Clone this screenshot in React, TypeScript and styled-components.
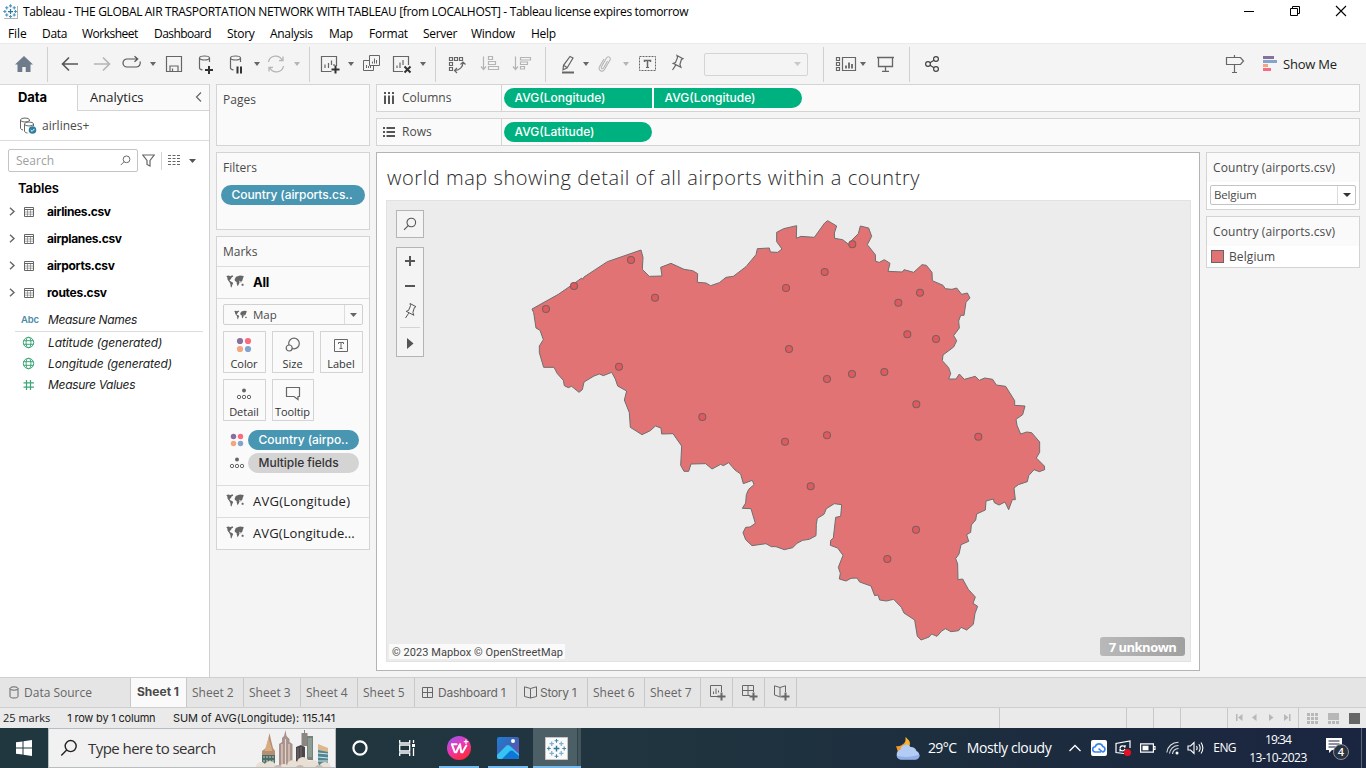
import React from 'react';
import styled, { createGlobalStyle } from 'styled-components';

const SANS = '"Open Sans", "Noto Sans", sans-serif';
const INTER = 'Inter, "Open Sans", sans-serif';
const INK = '#4a4a4a';
const LINE = '#d4d4d4';

const Global = createGlobalStyle`
  * { box-sizing: border-box; }
  body { margin: 0; background: #f4f4f4; overflow: hidden; font-family: ${SANS}; }
  svg { display: block; flex: none; }
`;

interface TextProps { $size?: number; $ls?: number; $weight?: number; $color?: string; $font?: string; $italic?: boolean; $ml?: number }
const Text = styled.span<TextProps>`
  display: block;
  font-family: ${p => p.$font ?? SANS};
  font-size: ${p => p.$size ?? 12}px;
  font-weight: ${p => p.$weight ?? 400};
  font-style: ${p => (p.$italic ? 'italic' : 'normal')};
  letter-spacing: ${p => p.$ls ?? 0}px;
  margin-left: ${p => p.$ml ?? 0}px;
  color: ${p => p.$color ?? INK};
  white-space: nowrap;
  line-height: 16px;
`;

const Window = styled.div`
  display: flex;
  flex-direction: column;
  width: 1366px;
  height: 768px;
`;

/* ---------- title and menu ---------- */
const TitleBar = styled.header`
  display: flex;
  align-items: center;
  height: 23px;
  padding-left: 3px;
  background: #fff;
`;
const WindowButtons = styled.div`
  display: flex;
  gap: 34px;
  margin-left: auto;
  padding-right: 19px;
  margin-top: -2px;
`;
const MenuBar = styled.nav`
  display: flex;
  height: 20px;
  background: #fff;
  padding: 2px 0 0 8px;
  align-items: center;
`;
const MenuItem = styled(Text)<{ $w: number }>`
  width: ${p => p.$w}px;
  color: #000;
`;

/* ---------- toolbar ---------- */
const ToolBar = styled.div`
  display: flex;
  align-items: center;
  height: 41px;
  border-top: 1px solid #ebebeb;
  background: #f4f4f4;
`;
const Slot = styled.div<{ $ml: number; $w: number }>`
  margin-left: ${p => p.$ml}px;
  width: ${p => p.$w}px;
  flex: none;
`;
const Divider = styled.div<{ $ml: number }>`
  margin-left: ${p => p.$ml}px;
  width: 1px;
  height: 35px;
  background: #d0d0d0;
`;
const FitBox = styled.div`
  display: flex;
  align-items: center;
  justify-content: flex-end;
  width: 104px;
  height: 23px;
  margin-left: 19px;
  padding-right: 6px;
  border: 1px solid #d4d4d4;
  border-radius: 2px;
`;

/* ---------- data pane ---------- */
const Body = styled.div`
  display: flex;
  flex: 1;
  min-height: 0;
`;
const DataPane = styled.aside`
  width: 210px;
  background: #fff;
  border-right: 1px solid #d0d0d0;
  border-top: 1px solid #d8d8d8;
`;
const PaneTabs = styled.div`
  display: flex;
  height: 26px;
`;
const DataTab = styled.div`
  width: 77px;
  padding: 4px 0 0 18px;
`;
const AnalyticsTab = styled.div`
  display: flex;
  flex: 1;
  justify-content: space-between;
  padding: 4px 7px 0 12px;
  background: #fafafa;
  border-left: 1px solid ${LINE};
  border-bottom: 1px solid ${LINE};
`;
const SourceRow = styled.div`
  display: flex;
  align-items: center;
  gap: 5px;
  height: 30px;
  padding-left: 20px;
  border-bottom: 1px solid #dcdcdc;
`;
const SearchRow = styled.div`
  display: flex;
  align-items: center;
  margin: 8px 0 0 8px;
  height: 23px;
`;
const SearchBox = styled.div`
  display: flex;
  align-items: center;
  justify-content: space-between;
  width: 130px;
  height: 23px;
  padding: 0 6px 0 7px;
  border: 1px solid #c4c4c4;
  border-radius: 2px;
`;
const TablesHeading = styled.div`
  height: 26px;
  padding: 8px 0 0 18px;
`;
const TableRow = styled.div`
  display: flex;
  align-items: center;
  height: 27px;
  padding-left: 9px;
`;
const FieldRow = styled.div<{ $first?: boolean }>`
  display: flex;
  align-items: center;
  height: ${p => (p.$first ? 26 : 21)}px;
  padding-top: ${p => (p.$first ? 2 : 0)}px;
  border-bottom: ${p => (p.$first ? '1px solid #dcdcdc' : 'none')};
  margin: 0 6px 0 15px;
`;
const FieldIcon = styled.div`
  width: 33px;
  padding-left: 7px;
`;

/* ---------- cards ---------- */
const CardColumn = styled.div`
  display: flex;
  flex-direction: column;
  gap: 6px;
  width: 154px;
  margin-left: 6px;
`;
const Card = styled.section<{ $h: number }>`
  height: ${p => p.$h}px;
  border: 1px solid ${LINE};
  background: #fafafa;
`;
const CardTitle = styled.div`
  padding: 7px 0 0 6px;
  height: 29px;
`;
const Pill = styled.div<{ $w: number; $bg: string; $side?: 'left' | 'right' }>`
  display: flex;
  align-items: center;
  width: ${p => p.$w}px;
  height: 20px;
  padding-left: 10.600px;
  background: ${p => p.$bg};
  border-radius: ${p => (p.$side === 'left' ? '10px 0 0 10px' : p.$side === 'right' ? '0 10px 10px 0' : '10px')};
`;
const FilterSlot = styled.div`
  padding: 3px 0 0 4px;
`;
const MarksRow = styled.div<{ $h: number }>`
  display: flex;
  align-items: center;
  gap: 9px;
  height: ${p => p.$h}px;
  padding: 0 0 2px 9px;
  border-top: 1px solid #dcdcdc;
`;
const MarksBody = styled.div`
  height: 187px;
  border-top: 1px solid #dcdcdc;
  padding: 5px 6px 0;
`;
const MarkSelect = styled.div`
  display: flex;
  align-items: center;
  height: 21px;
  padding-left: 10px;
  border: 1px solid #d0d0d0;
  border-radius: 2px;
`;
const SelectArrow = styled.div<{ $w: number }>`
  display: flex;
  align-items: center;
  justify-content: center;
  width: ${p => p.$w}px;
  height: 100%;
  margin-left: auto;
  border-left: 1px solid #dcdcdc;
`;
const MarkButtons = styled.div`
  display: grid;
  grid-template-columns: 43px 42px 43px;
  gap: 6px;
  margin-top: 6px;
`;
const MarkButton = styled.div`
  display: flex;
  flex-direction: column;
  align-items: center;
  justify-content: space-between;
  height: 42px;
  padding: 5px 1px 0 0;
  border: 1px solid ${LINE};
`;
const EncodingRow = styled.div`
  display: flex;
  align-items: center;
  gap: 4px;
  height: 20px;
  margin: 9px 0 -6px 7px;
`;

/* ---------- shelves and view ---------- */
const Work = styled.main`
  display: flex;
  flex-direction: column;
  gap: 6px;
  width: 984px;
  margin-left: 6px;
`;
const Shelf = styled.div`
  display: flex;
  align-items: center;
  height: 28px;
  border: 1px solid ${LINE};
  background: #fafafa;
`;
const ShelfLabel = styled.div`
  display: flex;
  align-items: center;
  gap: 7px;
  width: 125px;
  height: 26px;
  padding-left: 6px;
  margin-right: 2px;
  border-right: 1px solid ${LINE};
`;
const ViewRow = styled.div`
  display: flex;
  gap: 6px;
`;
const Sheet = styled.section`
  width: 824px;
  height: 519px;
  border: 1px solid #b4b4b4;
  background: #fff;
  padding: 0 8px 0 9px;
`;
const SheetTitle = styled.div`
  display: flex;
  align-items: center;
  height: 47px;
  padding: 3px 0 0 1px;
`;
const MapPane = styled.div`
  position: relative;
  width: 805px;
  height: 462px;
  border: 1px solid #e2e2e2;
  background: #ececec;
`;
const MapSearch = styled.div`
  position: absolute;
  left: 9px;
  top: 9px;
  display: flex;
  align-items: center;
  justify-content: center;
  width: 28px;
  height: 28px;
  border: 1px solid #b4b4b4;
  background: #f4f4f4;
`;
const MapTools = styled.div`
  position: absolute;
  left: 9px;
  top: 46px;
  width: 28px;
  height: 110px;
  border: 1px solid #b4b4b4;
  background: #f4f4f4;
`;
const Attribution = styled.div`
  position: absolute;
  left: 2px;
  bottom: 2px;
  display: flex;
  align-items: center;
  width: 176px;
  height: 15px;
  padding: 2px 0 0 3px;
  background: #fafafa;
`;
const Unknown = styled.div`
  position: absolute;
  right: 5px;
  bottom: 5px;
  display: flex;
  align-items: center;
  justify-content: center;
  width: 85px;
  height: 19px;
  border-radius: 3px;
  background: linear-gradient(90deg, #b9b9b9, #a0a0a0);
`;
const Legends = styled.div`
  display: flex;
  flex-direction: column;
  gap: 6px;
  width: 154px;
`;
const LegendCard = styled.section<{ $h: number }>`
  height: ${p => p.$h}px;
  border: 1px solid ${LINE};
  background: #fff;
`;
const LegendHead = styled.div`
  height: 29px;
  padding: 7px 0 0 6px;
  background: #fafafa;
`;
const FilterSelect = styled.div`
  display: flex;
  align-items: center;
  width: 146px;
  height: 20px;
  margin: 3px 0 0 3px;
  padding-left: 3px;
  border: 1px solid #c4c4c4;
  border-radius: 2px;
`;
const LegendItem = styled.div`
  display: flex;
  align-items: center;
  gap: 5px;
  height: 21px;
  padding-left: 4px;
`;
const Swatch = styled.div`
  width: 13px;
  height: 13px;
  border: 1px solid #666;
  background: #e27375;
`;

/* ---------- sheet tabs and status ---------- */
const TabBar = styled.div`
  display: flex;
  height: 31px;
  background: #e5e5e5;
  border-top: 1px solid #cfcfcf;
  border-bottom: 1px solid #cfcfcf;
`;
const SheetTab = styled.div<{ $w: number; $active?: boolean; $pl?: number }>`
  display: flex;
  align-items: center;
  gap: 5px;
  width: ${p => p.$w}px;
  padding-left: ${p => p.$pl ?? 5}px;
  padding-bottom: ${p => (p.$active ? 2 : 0)}px;
  background: ${p => (p.$active ? '#fafafa' : 'transparent')};
  border-right: 1px solid #c8c8c8;
`;
const StatusBar = styled.div`
  display: flex;
  align-items: center;
  height: 20px;
  background: #eaeaea;
`;
const StatusCells = styled.div`
  display: flex;
  height: 100%;
  margin-left: auto;
`;
const StatusCell = styled.div<{ $w: number; $pl?: number }>`
  display: flex;
  align-items: center;
  width: ${p => p.$w}px;
  height: 100%;
  padding-left: ${p => p.$pl ?? 0}px;
  border-left: 1px solid #c8c8c8;
`;

/* ---------- task bar ---------- */
const TaskBar = styled.footer`
  display: flex;
  height: 40px;
  background: linear-gradient(90deg, #21373f 0%, #20353f 45%, #1c2c3e 75%, #1a2540 100%);
`;
const TaskSlot = styled.div<{ $w: number; $active?: boolean; $line?: string }>`
  display: flex;
  align-items: center;
  justify-content: center;
  width: ${p => p.$w}px;
  padding-right: ${p => (p.$active ? 2 : 0)}px;
  background: ${p => (p.$active ? 'linear-gradient(90deg, #4c5f66 0 44px, #2f434a 44px 45px, #46555c 45px)' : 'transparent')};
  box-shadow: ${p => (p.$line ? `inset 0 -2px 0 ${p.$line}` : 'none')};
`;
const TaskSearch = styled.div`
  display: flex;
  align-items: center;
  width: 288px;
  padding-left: 11px;
  background: #f1f1f1;
  border: 1px solid #b8bdbf;
`;
const Tray = styled.div`
  display: flex;
  align-items: center;
  margin-left: auto;
`;
const Clock = styled.div`
  display: flex;
  flex-direction: column;
  align-items: center;
  gap: 2px;
  width: 60px;
  margin-left: 12px;
  padding-top: 1px;
`;
const Peek = styled.div`
  width: 5px;
  height: 40px;
  margin-left: 10px;
  border-left: 1px solid #5c6577;
`;

/* ---------- drawings ---------- */
interface GfxProps { w: number; h?: number; color?: string; sw?: number; children: React.ReactNode }
const Gfx = ({ w, h = 20, color = '#666', sw = 1, children }: GfxProps) => (
  <svg width={w} height={h} viewBox={`0 0 ${w} ${h}`} fill="none" stroke={color} strokeWidth={sw}>{children}</svg>
);
const Caret = ({ color = '#666', w = 6, h = 4 }: { color?: string; w?: number; h?: number }) => (
  <svg width={w} height={h} viewBox="0 0 6 4" preserveAspectRatio="none"><path d="M0 0h6L3 4z" fill={color} /></svg>
);
const PlusMark = ({ x, y }: { x: number; y: number }) => <path d={`M${x - 4} ${y}h8M${x} ${y - 4}v8`} stroke="#333" strokeWidth="2" />;
const Cylinder = ({ open = true }: { open?: boolean }) => (
  <g><ellipse cx="6.5" cy="4" rx="5" ry="2" /><path d={open ? 'M1.5 4v10c0 1 1 1.6 3 1.9M11.500 4v4' : 'M1.500 4v10c0 2.700 10 2.700 10 0V4'} /></g>
);
const Loupe = ({ size = 14, color = '#555', sw = 1.1 }: { size?: number; color?: string; sw?: number }) => (
  <svg width={size} height={size} viewBox="0 0 14 14" fill="none" stroke={color} strokeWidth={sw}><circle cx="8.300" cy="5.500" r="4.300" /><path d="M5.200 8.600L1 12.800" /></svg>
);
const PinShape = () => <path d="M8 1.500l6 3.200-1.600.800-1.500 5 1 2.800-7.700-4 2.300-.8 2-4.800zM6.700 11.200L3.500 16" />;
const WorldIcon = ({ w = 18, h = 13 }: { w?: number; h?: number }) => (
  <svg width={w} height={h} viewBox="0 0 18 13" fill="#666">
    <path d="M.3 1L3 .6l1 .7L6.500.3 7.300 1.600 5.600 2.600 5 4 3.700 5l.2 1L6 7l1.200 1-.9 2-.8 2.500-.8-.5-.3-3L3.300 7 1.600 4.700 1.300 2.600z" />
    <path d="M9 3.700L9.800 2l1.700-.8L14 .5l3.700.6-.3 1.200-.6 1.500-.5 2-1 .8-.3 1.300-.8-1.800-1-.3.4 1.400-1 2.600-1 1.400-.8-2.400-.2-1.800L9 6l-.4-1.300z" />
    <path d="M15.500 9.300l1.500-.7.700 1.200-.5 1.300-1.600-.5z" />
  </svg>
);
const dotColors = ['#87709c', '#fb6b80', '#f2a67e', '#82a4cd'];
const ColorDots = ({ s = 16, r = 3.1 }: { s?: number; r?: number }) => (
  <svg width={s} height={s} viewBox="0 0 16 16">
    {dotColors.map((c, i) => <circle key={c} cx={i % 2 ? 12 : 4} cy={i < 2 ? 4 : 12} r={r} fill={c} />)}
  </svg>
);
const DetailIcon = () => (
  <svg width="16" height="12" viewBox="0 0 16 12" fill="none" stroke="#666"><circle cx="8" cy="2.500" r="2" fill="#666" stroke="none" /><circle cx="3" cy="9" r="1.700" /><circle cx="8" cy="9" r="1.700" /><circle cx="13" cy="9" r="1.700" /></svg>
);
const TIcon = () => (
  <svg width="14" height="13" viewBox="0 0 14 13" fill="none" stroke="#666"><path d="M.5.500h13v12H.500zM4.500 5V3.500h5V5M7 3.500v6M5.500 9.500h3" /></svg>
);
const GridIcon = () => (
  <svg width="12" height="12" viewBox="0 0 12 12" fill="none" stroke="#666"><path d="M.5.500h10v10H.500zM5.500 .500v10M.500 5.500h10" /></svg>
);
const BookPath = 'M6.500 2.500L.500.800v9.700l6 1.500 6-1.500V.800zM6.500 2.500V12';
const Globe = () => (
  <svg width="13" height="13" viewBox="0 0 13 13" fill="none" stroke="#3da678"><circle cx="6.500" cy="6.500" r="5.200" /><ellipse cx="6.500" cy="6.500" rx="2.400" ry="5.200" /><path d="M1.500 4.700h10M1.500 8.300h10" /></svg>
);
const cross = (x: number, y: number, r: number) => `M${x - r} ${y}h${2 * r}M${x} ${y - r}v${2 * r}`;
const TableauMark = ({ size }: { size: number }) => (
  <svg width={size} height={size} viewBox="0 0 24 24" fill="none">
    <path d="M.5.500h23v23H.500z" fill="#fafafa" stroke="#c9c9c9" />
    <path d={cross(12, 12, 3)} stroke="#2f7599" strokeWidth="1.500" />
    <path d={cross(12, 4, 2) + cross(12, 20, 2) + cross(4, 12, 2) + cross(20, 12, 2)} stroke="#3c86b0" strokeWidth="1.100" />
    <path d={cross(7, 7, 2.300) + cross(17, 7, 2.300) + cross(7, 17, 2.300) + cross(17, 17, 2.300)} stroke="#7fb0d0" strokeWidth="1.300" />
  </svg>
);
const TableauSmall = () => (
  <svg width="15" height="15" viewBox="0 0 24 24" fill="none">
    <path d="M23.300 3v20.300H2" stroke="#9a9a9a" strokeWidth="1.300" />
    <path d={cross(12, 12, 4)} stroke="#2f7599" strokeWidth="2" />
    <path d={cross(12, 3, 2.500) + cross(12, 20, 2.500) + cross(3, 12, 2.500) + cross(20, 12, 2.500) + cross(6, 6, 2.600) + cross(18, 6, 2.600) + cross(6, 17.500, 2.600) + cross(18, 17.500, 2.600)} stroke="#4a93bb" strokeWidth="1.800" />
  </svg>
);

const belgium =
  '456,327 535,283 580,252 605,234 608,238 612,231 682,185 783,150 789,172 787,208 808,229 846,228 842,202 873,190 912,208 938,212 953,221 952,247 978,249 992,257 1018,248 1038,232 1060,229 1098,200 1128,164 1132,146 1168,144 1171,156 1193,157 1206,147 1190,125 1190,97 1211,86 1250,77 1249,115 1263,109 1303,112 1334,69 1343,62 1370,78 1363,99 1364,115 1388,119 1406,133 1414,122 1435,101 1441,78 1466,84 1475,109 1462,134 1486,164 1487,184 1498,187 1513,179 1530,190 1524,214 1567,216 1572,209 1601,217 1626,194 1639,196 1656,217 1657,242 1689,256 1696,266 1716,268 1730,264 1745,283 1762,279 1770,294 1758,307 1752,346 1742,346 1736,363 1738,384 1721,407 1730,422 1721,441 1689,465 1687,482 1706,503 1712,521 1706,537 1728,537 1738,522 1753,538 1786,529 1798,541 1814,534 1838,538 1849,555 1877,559 1904,602 1904,616 1935,618 1928,644 1908,658 1911,676 1922,702 1940,696 1955,698 1979,726 1979,757 1969,774 1993,798 1994,809 1978,815 1962,809 1946,827 1942,845 1915,854 1902,864 1906,899 1897,899 1886,929 1875,906 1857,915 1843,908 1840,897 1818,903 1816,930 1790,942 1787,960 1774,975 1772,997 1760,1004 1766,1024 1743,1034 1737,1062 1727,1076 1733,1092 1734,1139 1748,1137 1765,1168 1786,1191 1779,1210 1793,1219 1785,1240 1780,1273 1760,1290 1743,1282 1736,1292 1713,1295 1696,1286 1684,1294 1671,1309 1655,1302 1647,1311 1623,1320 1612,1309 1604,1260 1572,1239 1564,1222 1541,1198 1519,1203 1499,1200 1494,1185 1484,1187 1473,1158 1439,1146 1431,1134 1413,1135 1398,1143 1378,1137 1381,1120 1375,1102 1389,1066 1373,1044 1351,1036 1352,1021 1360,1014 1367,952 1382,949 1385,914 1363,911 1339,926 1332,943 1312,955 1309,973 1308,1007 1288,1018 1268,1021 1251,1030 1238,1043 1213,1049 1188,1040 1174,1040 1158,1031 1116,1037 1097,1019 1089,998 1097,982 1110,981 1126,970 1113,926 1087,925 1097,909 1099,884 1106,868 1122,854 1117,841 1090,851 1082,822 1065,810 1046,788 1030,797 1022,793 996,807 977,791 933,792 926,814 912,814 902,796 905,738 879,701 845,702 843,684 826,678 811,692 786,704 751,682 748,638 733,600 740,573 713,558 706,537 695,517 670,527 658,522 642,528 612,546 607,569 597,577 575,559 565,563 553,557 550,541 532,521 522,502 491,502 478,458 478,438 490,419 480,391 468,384 461,338';
const airports = [
  [498, 327], [582, 258], [753, 180], [825, 293], [717, 500], [1334, 216], [1417, 133], [1218, 264], [1620, 278], [1555, 308],
  [1582, 403], [1668, 417], [1227, 447], [1341, 537], [1416, 522], [1513, 516], [1609, 613], [967, 651], [1215, 725], [1341, 706],
  [1795, 710], [1292, 859], [1608, 989], [1522, 1077],
];
const CountryMap = () => (
  <svg width="803" height="460" viewBox="21 3 2409 1380">
    <polygon points={belgium} fill="#e27375" stroke="#6e6e6e" strokeWidth="3" strokeLinejoin="round" />
    {airports.map(([x, y]) => <circle key={`${x}-${y}`} cx={x} cy={y} r="10.500" fill="#e05a5d" stroke="#7c5e5d" strokeWidth="3.200" />)}
  </svg>
);

const menus: [string, number, number][] = [
  ['File', 34, -0.1], ['Data', 40, -0.3], ['Worksheet', 72, -0.5], ['Dashboard', 73, -0.55], ['Story', 43, -0.3], ['Analysis', 59, -0.3],
  ['Map', 40, -0.3], ['Format', 54, -0.25], ['Server', 48, -0.3], ['Window', 60, -0.25], ['Help', 40, -0.3],
];
const tables: [string, number][] = [['airlines.csv', -0.37], ['airplanes.csv', -0.36], ['airports.csv', -0.3], ['routes.csv', -0.28]];
const fields: [string, 'globe' | 'hash', number][] = [['Latitude (generated)', 'globe', -0.1], ['Longitude (generated)', 'globe', -0.13], ['Measure Values', 'hash', -0.3]];

const NewSheetIcon = () => (
  <svg width="17" height="16" viewBox="0 0 17 16" fill="none" stroke="#666"><path d="M8 11.500H.500V.500h11V7M3.500 9V6.500M6 9V3.500M8.500 7.500V5.500" /><path d="M7.500 11.500h8M11.500 7.500v8" strokeWidth="2" /></svg>
);

function Tools() {
  return (
    <ToolBar>
      <Slot $ml={14} $w={20}><svg width="20" height="20" viewBox="0 0 20 20"><path d="M10 2L1 10.500h2.500V18h4.800v-5h3.400v5h4.800v-7.500H19z" fill="#6e7b8b" /></svg></Slot>
      <Divider $ml={13} />
      <Slot $ml={13} $w={18}><Gfx w={18} color="#555" sw={1.6}><path d="M1.500 10H17M8 3.500L1.500 10 8 16.500" /></Gfx></Slot>
      <Slot $ml={14} $w={18}><Gfx w={18} color="#b4b4b4" sw={1.6}><path d="M1 10h15.500M10 3.500l6.500 6.500-6.500 6.500" /></Gfx></Slot>
      <Slot $ml={11} $w={20}><Gfx w={20} color="#555" sw={1.2}><path d="M15 4.500H5a4 4 0 000 8h9.500a4 4 0 003.500-5.500M12.500 1.800l3.200 2.700-3.200 2.700" transform="translate(0 .5)" /></Gfx></Slot>
      <Slot $ml={8} $w={6}><Caret /></Slot>
      <Slot $ml={9} $w={18}><Gfx w={18} sw={1.2}><path d="M1.500 2.500h15v15h-15zM5 17v-5h8v5M7.500 17v-2.500" /></Gfx></Slot>
      <Slot $ml={15} $w={16}><Gfx w={16} sw={1.2}><Cylinder /><PlusMark x={11} y={16} /></Gfx></Slot>
      <Slot $ml={15} $w={16}><Gfx w={16} sw={1.2}><Cylinder /><path d="M8.500 12.500v7M12 12.500v7" stroke="#333" strokeWidth="2" /></Gfx></Slot>
      <Slot $ml={9} $w={6}><Caret /></Slot>
      <Slot $ml={5.500} $w={20}><Gfx w={20} color="#b4b4b4" sw={1.3}><path d="M2.500 8a7.200 7.200 0 0113.700-1.500M17 2.500v4.200h-4M17.500 12A7.200 7.200 0 013.800 13.500M3 17.500v-4.200h4" /></Gfx></Slot>
      <Slot $ml={8.500} $w={6}><Caret color="#b4b4b4" /></Slot>
      <Divider $ml={9} />
      <Slot $ml={10} $w={20}><Gfx w={20} sw={1.2}><path d="M11.500 17.500h-10v-15h15V12M5 14v-3.500M8.500 14V9M11.500 11V6.500M14 12v-2" /><PlusMark x={15.5} y={15.500} /></Gfx></Slot>
      <Slot $ml={8} $w={6}><Caret /></Slot>
      <Slot $ml={8} $w={20}><Gfx w={20}><path d="M7.500 1.500h10v10h-10zM10.500 9.500V7.500M12.500 9.500V4.500M14.500 9.500V6M7.500 6.500h-6v10h10v-5M4.500 14v-3M6.500 14v-2M8.500 14v-2" /></Gfx></Slot>
      <Slot $ml={10} $w={20}><Gfx w={20} sw={1.2}><path d="M11 17.500H1.500v-15h15V11M5 14v-2.500M8 14V8.500M11 11V6" /><path d="M12.500 12.500l6 6M18.500 12.500l-6 6" stroke="#333" strokeWidth="2" /></Gfx></Slot>
      <Slot $ml={8} $w={6}><Caret /></Slot>
      <Divider $ml={9} />
      <Slot $ml={11} $w={20}><Gfx w={20} sw={1.2}><path d="M2.500 3.500h3v3h-3zM7.500 3.500h3v3h-3zM12.500 3.500h3v3h-3zM2.500 8.500h3v3h-3zM2.500 13.500h3v3h-3zM16 8.500c0 4-3 7.500-8 8M13.500 10.500l2.500-2.500 2.500 2.500M10 14l-2.500 2.500L10 19" /></Gfx></Slot>
      <Slot $ml={13} $w={20}><Gfx w={20} color="#b4b4b4" sw={1.2}><path d="M3.500 2.500v13M1 12.500l2.500 3 2.500-3M8.500 2.500h4v3h-4zM8.500 7.500h7v3h-7zM8.500 12.500h10v3h-10z" /></Gfx></Slot>
      <Slot $ml={12} $w={20}><Gfx w={20} color="#b4b4b4" sw={1.2}><path d="M3.500 2.500v13M1 12.500l2.500 3 2.500-3M8.500 3.500h10v2.500h-10zM8.500 8h7v2.500h-7zM8.500 12.500h4v2.500h-4z" /></Gfx></Slot>
      <Divider $ml={13} />
      <Slot $ml={14} $w={16}><Gfx w={16} sw={1.2}><path d="M10 2.500l3 1.500-6 10-4 1.800.500-4.500zM4 11.500l2.800 2" /><path d="M2 18.500h12" strokeWidth="2" /></Gfx></Slot>
      <Slot $ml={7} $w={6}><Caret /></Slot>
      <Slot $ml={8} $w={16}><Gfx w={16} color="#b4b4b4" sw={1.1}><path d="M10.500 7l-4 7c-1 1.600-3 .400-2.100-1.200L9.500 4c1.500-2.500 5-.500 3.500 2l-5.500 9.500c-2 3.400-7 .800-5-2.700L7 5" /></Gfx></Slot>
      <Slot $ml={10} $w={6}><Caret color="#b4b4b4" /></Slot>
      <Slot $ml={9} $w={20}><Gfx w={20}><path d="M1.500 2.500h16v14h-16z" strokeDasharray="2 1" /><path d="M6.500 8V6.500h6V8M9.500 6.500v7" strokeWidth="1.500" /><path d="M8 13.500h3" /></Gfx></Slot>
      <Slot $ml={11} $w={16}><Gfx w={16} sw={1.2}><PinShape /></Gfx></Slot>
      <FitBox><Caret color="#c8c8c8" w={7} /></FitBox>
      <Divider $ml={15} />
      <Slot $ml={11} $w={22}><Gfx w={22} sw={1.2}><path d="M1.500 3.500h3v3h-3zM1.500 8.500h3v3h-3zM1.500 13.500h3v3h-3zM7.500 3.500h13v13h-13z" /><path d="M11 14.500v-3M14 14.500v-6M17 14.500V10" strokeWidth="1.800" /></Gfx></Slot>
      <Slot $ml={3} $w={6}><Caret /></Slot>
      <Slot $ml={10} $w={20}><Gfx w={20} sw={1.3}><path d="M1 3.500h17M2.500 3.500v9h14v-9M9.500 12.500v4.500M6 17.300h7" /></Gfx></Slot>
      <Divider $ml={13} />
      <Slot $ml={14} $w={16}><Gfx w={16} color="#444" sw={1.2}><circle cx="4" cy="10" r="2.400" /><circle cx="12" cy="5" r="2.400" /><circle cx="12" cy="15" r="2.400" /><path d="M6 8.800l4-2.500M6 11.200l4 2.500" /></Gfx></Slot>
      <Slot $ml={285} $w={20}><Gfx w={20} sw={1.2}><path d="M9.500 1v2M1.500 3.500h14l3 3.500-3 3.500h-14zM9.500 10.500v8M7 18.500h5" /></Gfx></Slot>
      <Slot $ml={18} $w={15}><svg width="15" height="16" viewBox="0 0 15 16"><path d="M0 0h11v3H0z" fill="#87709c" /><path d="M0 4h14v3H0z" fill="#82a4cd" /><path d="M0 8h5v3H0z" fill="#f2a67e" /><path d="M0 12h8v3H0z" fill="#fb6b80" /></svg></Slot>
      <Text $size={13} $ls={-0.23} $color="#222" $ml={5}>Show Me</Text>
    </ToolBar>
  );
}

function LeftPane() {
  return (
    <DataPane>
      <PaneTabs>
        <DataTab><Text $size={13} $weight={700} $ls={-0.1} $font={INTER} $color="#000">Data</Text></DataTab>
        <AnalyticsTab><Text $size={13} $color="#222">Analytics</Text><Gfx w={7} h={16} sw={1.2}><path d="M6 3.500L1.500 8 6 12.500" /></Gfx></AnalyticsTab>
      </PaneTabs>
      <SourceRow>
        <svg width="17" height="18" viewBox="0 0 17 18" fill="none" stroke="#666">
          <ellipse cx="5" cy="3" rx="4.500" ry="2" /><path d="M.5 3v8c0 1 1 1.700 2.500 2M9.500 3v1" />
          <ellipse cx="9" cy="7" rx="4.500" ry="2" fill="#fff" /><path d="M4.500 7v7c0 1 1 1.800 3 2M13.500 7v2" />
          <circle cx="12.500" cy="13" r="3.800" fill="#2e7f9f" stroke="none" /><path d="M10.700 13l1.400 1.400 2.300-2.500" stroke="#fff" />
        </svg>
        <Text>airlines+</Text>
      </SourceRow>
      <SearchRow>
        <SearchBox><Text $color="#a0a0a0">Search</Text><Loupe size={11} /></SearchBox>
        <Slot $ml={4} $w={13}><Gfx w={13} h={13} sw={1.2}><path d="M.8 1h11.400L8 6.500V12L5 10.500v-4z" /></Gfx></Slot>
        <Slot $ml={6} $w={1}><Gfx w={1} h={18} color="#d4d4d4"><path d="M.5 0v18" /></Gfx></Slot>
        <Slot $ml={6} $w={13}><Gfx w={13} h={11}><path d="M0 .500h12M0 3.500h12M0 6.500h12M0 9.500h12" strokeDasharray="3 1.500" /></Gfx></Slot>
        <Slot $ml={8} $w={7}><Caret w={7} color="#555" /></Slot>
      </SearchRow>
      <TablesHeading><Text $size={13} $weight={600} $ls={-0.1} $font={INTER} $color="#000">Tables</Text></TablesHeading>
      {tables.map(([name, ls]) => (
        <TableRow key={name}>
          <Gfx w={7} h={9} sw={1.4}><path d="M1 .800l4 3.700-4 3.700" /></Gfx>
          <Slot $ml={8} $w={10}><Gfx w={10} h={10}><path d="M.5.500h9v9H.500zM.500 2.500h9" /><path d="M.500 5h9M.500 7.200h9M3.500 2.500v7M6.500 2.500v7" opacity=".7" strokeWidth=".8" /></Gfx></Slot>
          <Text $weight={650} $ls={ls} $font={INTER} $color="#000" $ml={13}>{name}</Text>
        </TableRow>
      ))}
      <FieldRow $first>
        <FieldIcon><Text $size={9.500} $weight={600} $ls={-0.2} $font={INTER} $color="#4a8ba8" $ml={-1}>Abc</Text></FieldIcon>
        <Text $italic $font={INTER} $ls={-0.33} $color="#222">Measure Names</Text>
      </FieldRow>
      {fields.map(([name, icon, ls]) => (
        <FieldRow key={name}>
          <FieldIcon>{icon === 'globe' ? <Globe /> : <Gfx w={13} h={12} color="#3da678" sw={1.2}><path d="M4.500 1v10M8.500 1v10M1.500 3.800h10.500M1.500 8.200h10.500" /></Gfx>}</FieldIcon>
          <Text $italic $font={INTER} $ls={ls} $color="#222">{name}</Text>
        </FieldRow>
      ))}
    </DataPane>
  );
}

function Cards() {
  return (
    <CardColumn>
      <Card $h={62}><CardTitle><Text>Pages</Text></CardTitle></Card>
      <Card $h={78}>
        <CardTitle><Text>Filters</Text></CardTitle>
        <FilterSlot><Pill $w={144} $bg="#4996b2"><Text $weight={500} $font={INTER} $ls={-0.09} $color="#fff">Country (airports.cs..</Text></Pill></FilterSlot>
      </Card>
      <Card $h={314}>
        <CardTitle><Text>Marks</Text></CardTitle>
        <MarksRow $h={32}><WorldIcon /><Text $size={13} $weight={700} $font={INTER} $ls={-0.3} $color="#000">All</Text></MarksRow>
        <MarksBody>
          <MarkSelect><WorldIcon w={13} h={10} /><Text $size={11.5} $ml={6}>Map</Text><SelectArrow $w={18}><Caret w={7} /></SelectArrow></MarkSelect>
          <MarkButtons>
            <MarkButton><ColorDots /><Text $size={11} $ls={-0.1} $color="#333">Color</Text></MarkButton>
            <MarkButton><Gfx w={16} h={16} sw={1.2}><circle cx="9" cy="6.500" r="5.300" /><circle cx="4.200" cy="11" r="3" fill="#fafafa" /></Gfx><Text $size={11} $color="#333">Size</Text></MarkButton>
            <MarkButton><Slot $ml={0} $w={14}><Gfx w={14} h={2}><g /></Gfx><TIcon /></Slot><Text $size={11} $color="#333">Label</Text></MarkButton>
            <MarkButton><Slot $ml={0} $w={16}><Gfx w={14} h={3}><g /></Gfx><DetailIcon /></Slot><Text $size={11} $color="#333">Detail</Text></MarkButton>
            <MarkButton><Gfx w={16} h={16} sw={1.2}><path d="M1.500 2.500h13v9h-1.500V14.500l-4-3h-7.500z" /></Gfx><Text $size={11} $ls={-0.08} $color="#333">Tooltip</Text></MarkButton>
          </MarkButtons>
          <EncodingRow><ColorDots s={14} /><Pill $w={111} $bg="#4996b2"><Text $weight={500} $font={INTER} $ls={-0.05} $color="#fff">Country (airpo..</Text></Pill></EncodingRow>
          <EncodingRow><Slot $ml={-1} $w={15}><DetailIcon /></Slot><Pill $w={111} $bg="#d4d4d4"><Text $weight={500} $font={INTER} $ls={-0.05} $color="#333">Multiple fields</Text></Pill></EncodingRow>
        </MarksBody>
        <MarksRow $h={32}><WorldIcon /><Text $size={13} $ls={0.24} $color="#222">AVG(Longitude)</Text></MarksRow>
        <MarksRow $h={32}><WorldIcon /><Text $size={13} $ls={0.1} $color="#222">AVG(Longitude...</Text></MarksRow>
      </Card>
    </CardColumn>
  );
}

const PillText = (props: { children: string }) => <Text $weight={500} $font={INTER} $color="#fff">{props.children}</Text>;

function Workspace() {
  return (
    <Work>
      <Shelf>
        <ShelfLabel><Gfx w={12} h={12} color="#555" sw={2}><path d="M2 3.500V12M6 3.500V12M10 3.500V12M2 0v2M6 0v2M10 0v2" /></Gfx><Text>Columns</Text></ShelfLabel>
        <Pill $w={148} $bg="#00b180" $side="left"><PillText>AVG(Longitude)</PillText></Pill>
        <Slot $ml={2} $w={148}><Pill $w={148} $bg="#00b180" $side="right"><PillText>AVG(Longitude)</PillText></Pill></Slot>
      </Shelf>
      <Shelf>
        <ShelfLabel><Gfx w={12} h={12} color="#555" sw={2}><path d="M3.500 2H12M3.500 6H12M3.500 10H12M0 2h2M0 6h2M0 10h2" /></Gfx><Text>Rows</Text></ShelfLabel>
        <Pill $w={148} $bg="#00b180"><PillText>AVG(Latitude)</PillText></Pill>
      </Shelf>
      <ViewRow>
        <Sheet>
          <SheetTitle><Text $size={20} $weight={300} $ls={0.56} $color="#2a2a2a">world map showing detail of all airports within a country</Text></SheetTitle>
          <MapPane>
            <CountryMap />
            <MapSearch><Loupe size={14} /></MapSearch>
            <MapTools>
              <Gfx w={26} h={108} color="#555">
                <path d="M8 13h10M13 8v10M8 38h10" strokeWidth="2" />
                <g transform="translate(5 54)"><PinShape /></g>
                <path d="M3 79.500h20" stroke="#d4d4d4" />
                <path d="M10 90v11l6.500-5.500z" fill="#555" stroke="none" />
              </Gfx>
            </MapTools>
            <Attribution><Text $size={11} $ls={0.07} $font="Roboto, sans-serif" $color="#444">© 2023 Mapbox © OpenStreetMap</Text></Attribution>
            <Unknown><Text $size={13} $weight={700} $ls={-0.5} $color="#fff">7 unknown</Text></Unknown>
          </MapPane>
        </Sheet>
        <Legends>
          <LegendCard $h={58}>
            <LegendHead><Text $ls={0.12}>Country (airports.csv)</Text></LegendHead>
            <FilterSelect><Text $size={11.5} $ls={-0.15}>Belgium</Text><SelectArrow $w={18}><Caret w={8} color="#333" /></SelectArrow></FilterSelect>
          </LegendCard>
          <LegendCard $h={52}>
            <LegendHead><Text $ls={0.12}>Country (airports.csv)</Text></LegendHead>
            <LegendItem><Swatch /><Text $ls={0.1}>Belgium</Text></LegendItem>
          </LegendCard>
        </Legends>
      </ViewRow>
    </Work>
  );
}

const Sheets = () => (
  <TabBar>
    <SheetTab $w={131} $pl={9}><Gfx w={10} h={13}><ellipse cx="5" cy="2.500" rx="4" ry="1.700" /><path d="M1 2.500v8c0 2 8 2 8 0v-8" /></Gfx><Text $color="#666">Data Source</Text></SheetTab>
    <SheetTab $w={56} $active $pl={6}><Text $weight={650} $font={INTER}>Sheet 1</Text></SheetTab>
    {[2, 3, 4, 5].map(n => <SheetTab key={n} $w={57}><Text $color="#666">{`Sheet ${n}`}</Text></SheetTab>)}
    <SheetTab $w={102} $pl={7}><GridIcon /><Text $font={INTER} $ls={-0.26} $color="#666" $ml={-1}>Dashboard 1</Text></SheetTab>
    <SheetTab $w={71} $pl={7}><Gfx w={13} h={13}><path d={BookPath} /></Gfx><Text $font={INTER} $ls={-0.3} $color="#666" $ml={-2}>Story 1</Text></SheetTab>
    <SheetTab $w={57}><Text $color="#666">Sheet 6</Text></SheetTab>
    <SheetTab $w={56}><Text $color="#666">Sheet 7</Text></SheetTab>
    <SheetTab $w={32} $pl={9}><NewSheetIcon /></SheetTab>
    <SheetTab $w={32} $pl={9}><Gfx w={16} h={16}><path d="M8 10.500H.500V.500h11V7M6 .500v10M.500 5.500h11" /><path d="M7.500 11.500h8M11.500 7.500v8" strokeWidth="2" /></Gfx></SheetTab>
    <SheetTab $w={32} $pl={9}><Gfx w={16} h={16}><path d="M8 11.500l-1.500.500L.500 10V.800l5.500 1.700 5.500-1.700V7M6 2.500v9" /><path d="M7.500 11.500h8M11.500 7.500v8" strokeWidth="2" /></Gfx></SheetTab>
  </TabBar>
);

const Status = () => (
  <StatusBar>
    <Text $size={11} $color="#222" $ml={3}>25 marks</Text>
    <Text $size={11} $font={INTER} $ls={-0.2} $color="#222" $ml={17}>1 row by 1 column</Text>
    <Text $size={11} $font={INTER} $ls={-0.05} $color="#222" $ml={17.500}>SUM of AVG(Longitude): 115.141</Text>
    <StatusCells>
      <StatusCell $w={127} />
      <StatusCell $w={27} />
      <StatusCell $w={27} />
      <StatusCell $w={47} />
      <StatusCell $w={71} $pl={8}>
        <svg width="56" height="8" viewBox="0 0 56 8" fill="#b8b8b8"><path d="M0 0h1.500v7H0zM6.500 0v7L2 3.500zM20.500 0v7L16 3.500zM33 0v7l4.500-3.500zM48 0v7l4.500-3.500zM53 0h1.500v7H53z" /></svg>
      </StatusCell>
      <StatusCell $w={68} $pl={8}>
        <svg width="53" height="11" viewBox="0 0 53 11" fill="#b8b8b8">
          <path d="M0 0h3v3H0zM4 0h3v3H4zM8 0h3v3H8zM0 4h3v3H0zM4 4h3v3H4zM8 4h3v3H8zM0 8h3v3H0zM4 8h3v3H4zM8 8h3v3H8zM21 0h11v7H21zM21 8h3v3h-3zM25 8h3v3h-3zM29 8h3v3h-3z" />
          <path d="M42 0h11v11H42z" fill="#666" />
        </svg>
      </StatusCell>
    </StatusCells>
  </StatusBar>
);

const Skyline = () => (
  <svg width="79" height="38" viewBox="0 0 79 38">
    <path d="M7 38V22l4-3 2-8 1.500-7L16 11l2 8 2 3v16z" fill="#b98f73" />
    <path d="M7 26h13v12H7z" fill="#46706f" /><path d="M9 27v11M12 27v11M15 27v11M18 27v11" stroke="#e5c7a2" strokeDasharray="2 2" />
    <path d="M9.500 22l4-13 4 13z" fill="#d9ad83" />
    <path d="M24 38V15l3-2V9l2-2L30.500 1l1 6 3 3v3l3 2v23z" fill="#a8928e" />
    <path d="M27 15v23M30.500 10v28M34 15v23" stroke="#e6d3c4" strokeWidth="1.200" />
    <path d="M41 18l5-2 4 2v18h-9z" fill="#4b4648" /><path d="M43 19v14M46 18v14" stroke="#7a6f70" />
    <path d="M46.500 4h6v13h-6zM49 1h1v4h-1z" fill="#8c8683" /><path d="M52 7h6v24h-6z" fill="#74837c" /><path d="M54 9v19M56 9v19" stroke="#a9b5aa" />
    <path d="M63 15l10 4v19H63z" fill="#dfb78c" /><path d="M63 21l10 2v15H63z" fill="#4f8693" /><path d="M63 24l10 1M63 28l10 1M63 32h10" stroke="#d9e4e2" />
    <g fill="#eadfd4"><circle cx="6" cy="38" r="5" /><circle cx="15" cy="38" r="6" /><circle cx="29" cy="40" r="5" /><circle cx="38" cy="37" r="6" /><circle cx="48" cy="34" r="6" /><circle cx="58" cy="37" r="6" /><circle cx="70" cy="39" r="6" /></g>
    <g fill="#cbb9ac"><circle cx="23" cy="41" r="5" /><circle cx="45" cy="41" r="5" /><circle cx="64" cy="41" r="5" /></g>
  </svg>
);

function WindowsBar() {
  return (
    <TaskBar>
      <TaskSlot $w={48}><svg width="16" height="16" viewBox="0 0 16 16" fill="#fff"><path d="M0 2.300l6.500-.9v6.100H0zM7.500 1.200L16 0v7.500H7.500zM0 8.500h6.500v6.100L0 13.700zM7.500 8.500H16V16l-8.500-1.200z" /></svg></TaskSlot>
      <TaskSearch>
        <Loupe size={18} color="#222" sw={1.1} />
        <Text $size={15} $ls={-0.55} $color="#333" $ml={10}>Type here to search</Text>
        <Slot $ml={39} $w={79}><Skyline /></Slot>
      </TaskSearch>
      <TaskSlot $w={48}><Gfx w={16} h={16} color="#fff" sw={2.2}><circle cx="8" cy="8" r="6.600" /></Gfx></TaskSlot>
      <TaskSlot $w={47}><Gfx w={17} h={16} color="#fff" sw={1.3}><path d="M.7 0v3h10V0M.700 16v-3h10v3M.700 5h10v6h-10zM14.500 0v3M14.500 8v8" /><path d="M13 4h3v3h-3z" fill="#fff" stroke="none" /></Gfx></TaskSlot>
      <TaskSlot $w={8} />
      <TaskSlot $w={40} $line="#76b9ed">
        <svg width="24" height="24" viewBox="0 0 24 24">
          <defs><linearGradient id="wps" x1="0" y1="0" x2=".6" y2="1"><stop offset="0" stopColor="#8a5cf0" /><stop offset=".5" stopColor="#e838b8" /><stop offset="1" stopColor="#ff2a3c" /></linearGradient></defs>
          <circle cx="12" cy="12" r="12" fill="url(#wps)" />
          <path d="M9.500 8.200H4.800l3 8h1.400L13 8.200l1.200 8h1.300L19.300 9.500" fill="none" stroke="#fff" strokeWidth="2" strokeLinejoin="round" strokeLinecap="round" /><path d="M19 3.500v4.500M16.800 5.700h4.500" stroke="#fff" strokeWidth="1.200" />
        </svg>
      </TaskSlot>
      <TaskSlot $w={9} />
      <TaskSlot $w={40} $line="#76b9ed">
        <svg width="22" height="22" viewBox="0 0 22 22">
          <defs><linearGradient id="sky" x1="0" y1="0" x2="1" y2="1"><stop offset="0" stopColor="#1b7fd6" /><stop offset=".5" stopColor="#3e63b8" /><stop offset="1" stopColor="#7a4db0" /></linearGradient></defs>
          <rect width="22" height="22" rx="2" fill="url(#sky)" /><path d="M0 18L9.500 8.500q1.500-1 3 0L22 17v3q0 2-2 2H2q-2 0-2-2z" fill="#35c3f3" /><path d="M5 22l8-8q1.500-1 3 0l6 5v1q0 2-2 2z" fill="#0d77d8" /><circle cx="16" cy="4" r="2" fill="#fff" />
        </svg>
      </TaskSlot>
      <TaskSlot $w={5} />
      <TaskSlot $w={48} $active $line="#76b9ed"><TableauMark size={23} /></TaskSlot>
      <Tray>
        <svg width="25" height="23" viewBox="0 0 25 23">
          <path d="M9.500 0c3 3 7 5 2.500 12L2 11c5-1 8-4 7.500-11z" fill="#f5b32f" /><path d="M0 9c3 1 7-1 9-4l1 8-8 2z" fill="#f39a24" />
          <path d="M5 22.500a5 5 0 01-.5-9.800 5.500 5.500 0 0110-2.700 6 6 0 016 4 4.500 4.500 0 01-1 8.500z" fill="#b3ccf5" /><path d="M5 22.500a5 5 0 01-4.500-4c5 2 16 2 23.300-1a4.500 4.500 0 01-4.300 5z" fill="#8fb0e8" />
        </svg>
        <Text $size={14} $ls={-0.6} $color="#fff" $ml={7}>29°C</Text>
        <Text $size={14} $ls={-0.4} $color="#fff" $ml={10.500}>Mostly cloudy</Text>
        <Slot $ml={18} $w={12}><Gfx w={12} h={8} color="#fff" sw={1.3}><path d="M.5 7L6 1.500 11.500 7" /></Gfx></Slot>
        <Slot $ml={10} $w={16}><svg width="16" height="16" viewBox="0 0 16 16"><rect width="16" height="16" rx="2" fill="#fff" /><path d="M10 12H4.500a2.600 2.600 0 01-.3-5.200 4 4 0 017.600-.3A2.800 2.800 0 0111.500 12L7.500 8.500" fill="none" stroke="#3c82f0" strokeWidth="1.600" /></svg></Slot>
        <Slot $ml={8} $w={17}><Gfx w={17} h={16} color="#fff" sw={1.2}><path d="M9 13.500l-8-1V3.500L15 1v7M5 8.500c0-3 4-3.500 5-1V5M10 9c-1 2.500-4 2.500-5 0v2.500" /><circle cx="12.500" cy="12.500" r="3.500" fill="#e81123" stroke="none" /></Gfx></Slot>
        <Slot $ml={8} $w={16}><Gfx w={16} h={10} color="#fff" sw={1.2}><path d="M.6.800h12.800v8.400H.600zM13.500 3.500H15v3h-1.500" /><path d="M2.500 2.700h6v4.600h-6z" fill="#fff" stroke="none" /></Gfx></Slot>
        <Slot $ml={10} $w={13}><Gfx w={13} h={14} color="#fff" sw={1.1}><path d="M.8 11.500C1.500 5.500 6 1.500 12.500 1.300M3.500 12.500c.5-4.500 4-8 9-8M6.500 13c.3-3 2.500-5.300 6-5.500" opacity=".85" /><circle cx="11" cy="12" r="1.500" fill="#fff" stroke="none" /></Gfx></Slot>
        <Slot $ml={8} $w={17}><Gfx w={17} h={14} color="#fff" sw={1.1}><path d="M1 5h2.500L7 1.500v11L3.500 9H1zM9.500 5c.8 1.300.8 2.700 0 4M11.800 3.200c1.800 2.500 1.800 5.100 0 7.600M14 1.500c2.500 3.700 2.500 7.300 0 11" /></Gfx></Slot>
        <Text $ls={-0.6} $color="#fff" $ml={9}>ENG</Text>
        <Clock><Text $ls={-0.95} $color="#fff">19:34</Text><Text $ls={-0.5} $color="#fff">13-10-2023</Text></Clock>
        <Slot $ml={17} $w={26}>
          <svg width="26" height="26" viewBox="0 0 26 26"><path d="M1 3h16v12H7l-3 3v-3H1z" fill="#fff" /><path d="M3.500 6h11M3.500 9h11M3.500 12h7" stroke="#1a2540" /><circle cx="16" cy="17" r="7.500" fill="#2b3340" stroke="#8b919b" /><text x="16" y="21" fill="#fff" fontSize="11" fontWeight="600" fontFamily="Open Sans" textAnchor="middle">4</text></svg>
        </Slot>
        <Peek />
      </Tray>
    </TaskBar>
  );
}

export default function App() {
  return (
    <Window>
      <Global />
      <TitleBar>
        <TableauSmall />
        <Text $ls={-0.33} $color="#000" $ml={5}>Tableau - THE GLOBAL AIR TRASPORTATION NETWORK WITH TABLEAU [from LOCALHOST] - Tableau license expires tomorrow</Text>
        <WindowButtons>
          <Gfx w={12} h={12} color="#000"><path d="M1 6.500h10" /></Gfx>
          <Gfx w={12} h={12} color="#000"><path d="M1.500 3.500h7v7h-7zM3.500 3V1.500h7v7H9" /></Gfx>
          <Gfx w={12} h={12} color="#000" sw={1.1}><path d="M1 1l10 10M11 1L1 11" /></Gfx>
        </WindowButtons>
      </TitleBar>
      <MenuBar>{menus.map(([name, w, ls]) => <MenuItem key={name} $w={w} $ls={ls}>{name}</MenuItem>)}</MenuBar>
      <Tools />
      <Body><LeftPane /><Cards /><Workspace /></Body>
      <Sheets />
      <Status />
      <WindowsBar />
    </Window>
  );
}
